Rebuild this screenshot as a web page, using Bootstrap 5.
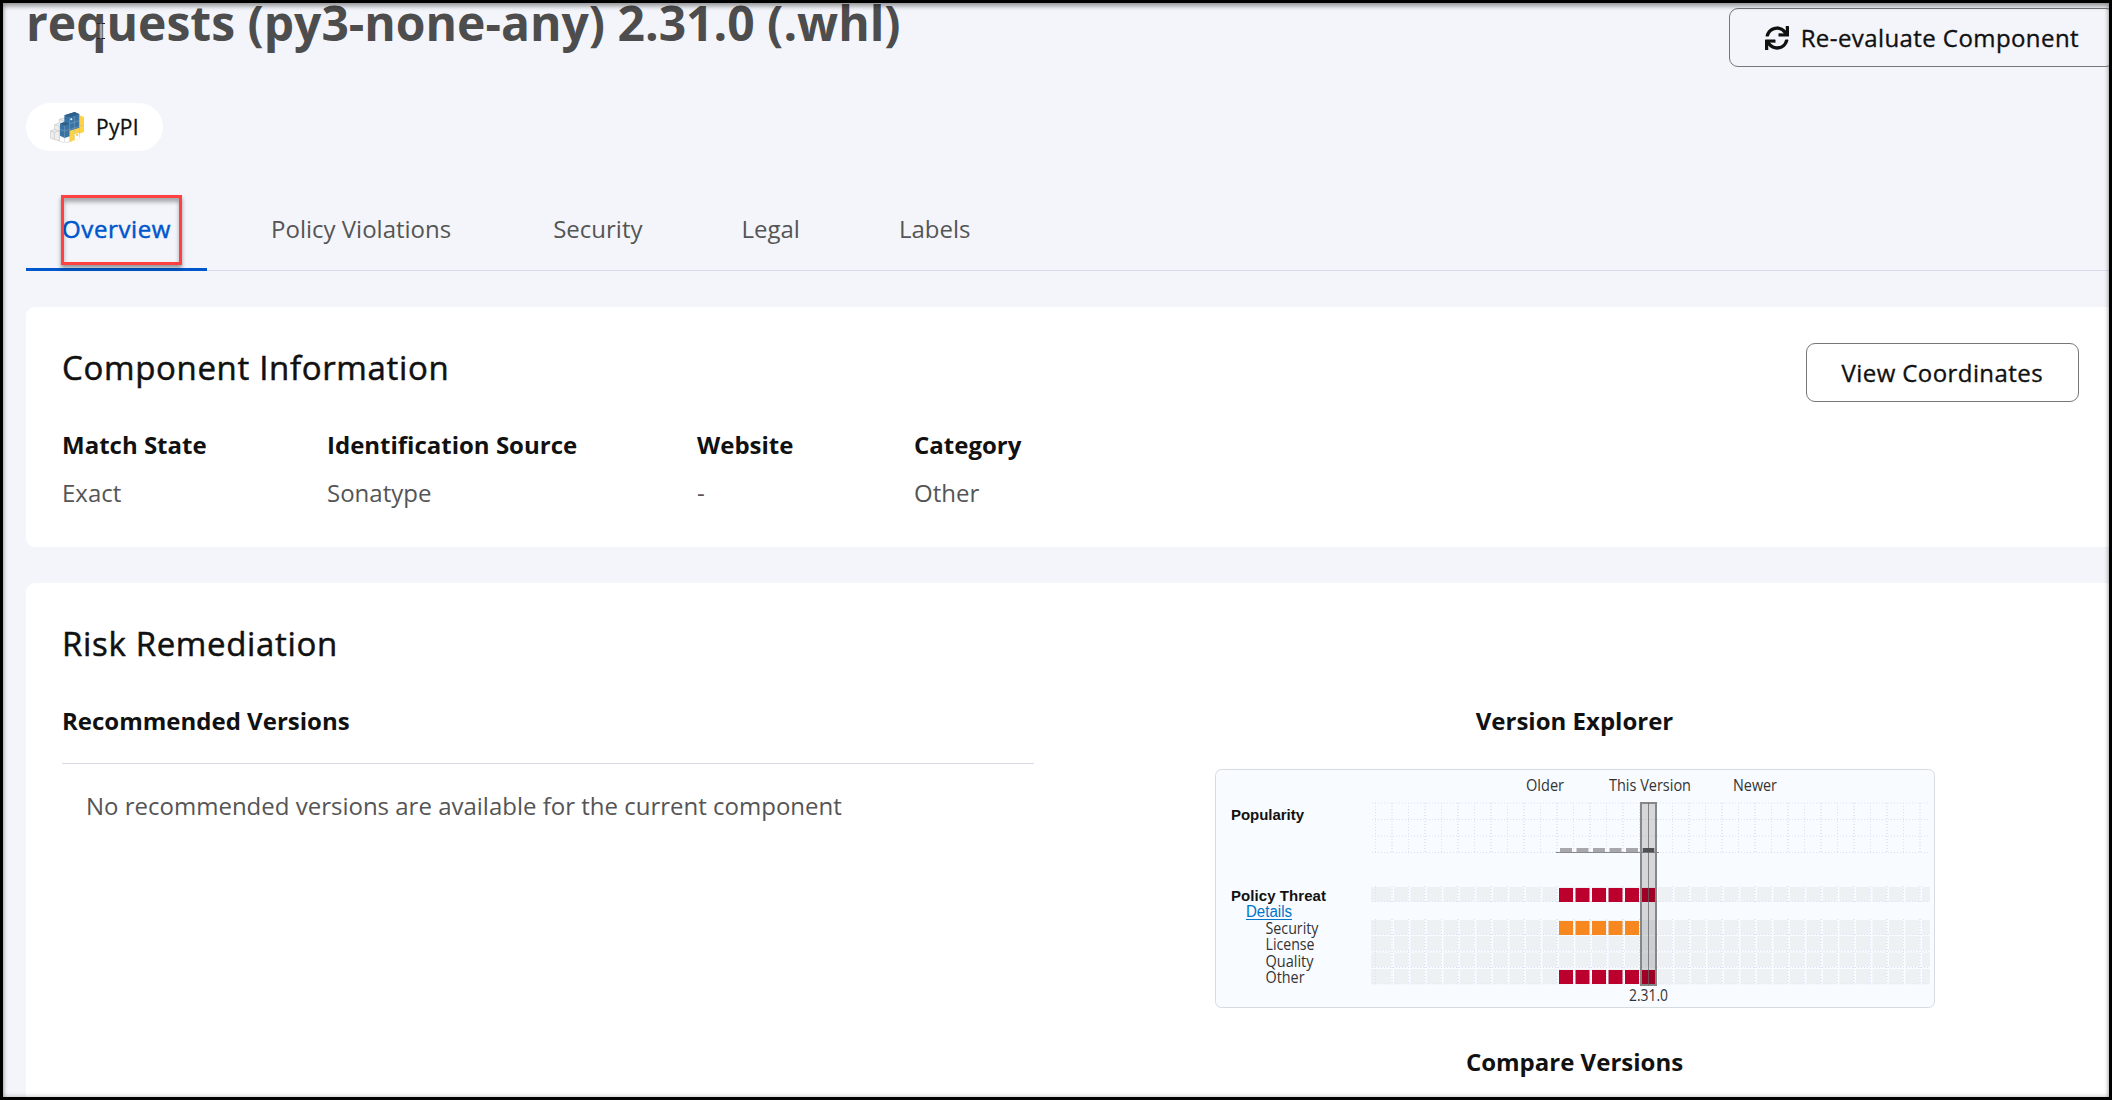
<!DOCTYPE html>
<html lang="en">
<head>
<meta charset="utf-8">
<title>Component details</title>
<link href="https://cdn.jsdelivr.net/npm/bootstrap@5.3.0/dist/css/bootstrap.min.css" rel="stylesheet">
<style>
body{font-family:"Open Sans",sans-serif;font-size:24px;line-height:36px;color:#4d4d4d;background:#f4f5fa;width:2112px;height:1100px;overflow:hidden}
.screen{width:2112px;height:1100px;overflow:hidden;position:relative}
.frame{position:absolute;inset:0;border:3px solid #000;pointer-events:none;box-shadow:inset 0 4px 4px rgba(0,0,0,.27),inset 0 0 5px rgba(0,0,0,.28)}
.page-body{width:2089px;margin-left:26px}
.page-title{font-size:48px;font-weight:700;line-height:44px;margin:1px 0 0;color:#4d4d4d;white-space:nowrap}
.header-row{height:52px}
.outline-btn{font-size:24px;line-height:35px;letter-spacing:.42px;-webkit-text-stroke:.35px #111;color:#111;border:1px solid #77777a;border-radius:9px;padding:11px 35px;height:59px;white-space:nowrap}
.re-eval{margin-top:8px;gap:12px}
.eco-pill{margin-top:51px;width:137px;height:48px;border-radius:24px;background:#fff;color:#111;font-size:21px;letter-spacing:.3px;-webkit-text-stroke:.3px #111;padding-left:24px;gap:12px}
.tab-strip{margin-top:40px;height:80px;border-bottom:1px solid #d9dbec}
.tab-strip .nav-link{padding:20px 36px 21px;color:#555;border-bottom:3px solid transparent;height:80px;border-radius:0;white-space:nowrap}
.tab-strip .nav-link.active{color:#0057cc;letter-spacing:.62px;-webkit-text-stroke:.5px #0057cc;border-bottom-color:#0057cc}
.t2{margin-left:28px}.t3{margin-left:30px}.t4{margin-left:27px}.t5{margin-left:27px}
.highlight{position:absolute;left:61px;top:195px;width:121px;height:70px;border:3px solid #ff4141;box-shadow:0 3px 4px rgba(0,0,0,.4),inset 0 4px 4px rgba(0,0,0,.32)}
.tile{background:#fff;border-radius:9px;margin-top:36px;padding:36px}
.tile h2{font-size:33px;font-weight:400;letter-spacing:.66px;-webkit-text-stroke:.5px #111;line-height:50px;color:#111;margin:0}
.tile h3,.tile dt{font-size:24px;font-weight:700;line-height:36px;color:#111;margin:0}
.info{height:240px}
.risk{height:560px}
.facts{margin-top:25px}
.facts dd{margin:12px 0 0;line-height:36px;color:#555}
.f1{width:265px}.f2{width:370px}.f3{width:217px}
.risk-cols{margin-top:34px}
.rec{width:972px}
.rec .msg{border-top:1px solid #d9dae8;margin-top:24px;padding:24px;color:#555}
.explorer{width:1009px}
.chart{display:block;margin:30px 0 0 2px}
.tile .compare{margin-top:35px}
.chart text{font-family:"Open Sans",sans-serif;font-size:16px;fill:#333}
.chart .hd{font-family:"Liberation Sans",sans-serif;font-size:15px;font-weight:700;fill:#111}
.chart .lnk{font-family:"Liberation Sans",sans-serif;fill:#0074c8}
.cursor{position:absolute;left:96px;top:22px}
</style>
<script src="https://cdn.jsdelivr.net/npm/bootstrap@5.3.0/dist/js/bootstrap.bundle.min.js"></script>
</head>
<body>
<div class="screen">
<main class="page-body">
  <header class="header-row d-flex justify-content-between align-items-start">
    <h1 class="page-title">requests (py3-none-any) 2.31.0 (.whl)</h1>
    <button class="btn outline-btn re-eval d-flex align-items-center" type="button">
      <svg width="24" height="24" viewBox="0 0 512 512" fill="#111"><path d="M440.65 12.57l4 82.77A247.16 247.16 0 0 0 255.83 8C134.73 8 33.91 94.92 12.29 209.82A12 12 0 0 0 24.09 224h49.05a12 12 0 0 0 11.67-9.26 175.91 175.91 0 0 1 317-56.94l-101.46-4.86a12 12 0 0 0-12.57 12v47.41a12 12 0 0 0 12 12H500a12 12 0 0 0 12-12V12a12 12 0 0 0-12-12h-47.37a12 12 0 0 0-11.98 12.57zM255.83 432a175.61 175.61 0 0 1-146-77.8l101.8 4.87a12 12 0 0 0 12.57-12v-47.4a12 12 0 0 0-12-12H12a12 12 0 0 0-12 12V500a12 12 0 0 0 12 12h47.35a12 12 0 0 0 12-12.6l-4.15-82.57A247.17 247.17 0 0 0 255.83 504c121.11 0 221.93-86.92 243.55-201.82a12 12 0 0 0-11.8-14.18h-49.05a12 12 0 0 0-11.67 9.26A175.86 175.86 0 0 1 255.83 432z"/></svg>
      <span>Re-evaluate Component</span>
    </button>
  </header>
  <div class="eco-pill d-flex align-items-center">
    <svg width="34" height="31" viewBox="0 0 102 93">
      <g fill="#efefef" stroke="#c4c4c4" stroke-width="2">
        <path d="M1 57l13-5V38l14-5V22l15-4 20 10v60l-20 4L1 78z"/>
        <path d="M1 57l12 4v20M13 61l17-6M14 38l14 5v44M28 43l16-5M28 22l15 5M14 52l14 5"/>
      </g>
      <path fill="#ffd343" d="M60 52l28-8V10l14 5v46l-14 5v14l-28 9z"/>
      <path fill="#fff" d="M30 70l14 7 15-5v15l-15 5-14-5zM73 66l14-4 1 18-14 4zM88 65l14-5v13l-14 5z"/>
      <path fill="#3873a5" d="M43 10L74 0l14 7v40l-29 9v17l-15 5-14-7V35l13-6z"/>
      <path fill="#2f608b" d="M43 10L74 0l14 7-29 9zM30 35l14-5 15 5-15 6z"/>
      <g fill="none" stroke="#9fb4c4" stroke-width="1.2"><path d="M44 41v50M59 16v71M73 12v69M88 7v70M44 57l58-18M59 35l29-9M30 52l14 6"/></g>
      <circle cx="64" cy="22" r="3" fill="#fff"/><circle cx="81" cy="68" r="4" fill="#ffd343"/>
    </svg>
    <span>PyPI</span>
  </div>
  <nav class="nav tab-strip flex-nowrap">
    <a class="nav-link active">Overview</a>
    <a class="nav-link t2">Policy Violations</a>
    <a class="nav-link t3">Security</a>
    <a class="nav-link t4">Legal</a>
    <a class="nav-link t5">Labels</a>
  </nav>
  <section class="tile info">
    <div class="d-flex justify-content-between align-items-start">
      <h2>Component Information</h2>
      <button class="btn outline-btn" type="button">View Coordinates</button>
    </div>
    <dl class="facts d-flex mb-0">
      <div class="f1"><dt>Match State</dt><dd>Exact</dd></div>
      <div class="f2"><dt>Identification Source</dt><dd>Sonatype</dd></div>
      <div class="f3"><dt>Website</dt><dd>-</dd></div>
      <div><dt>Category</dt><dd>Other</dd></div>
    </dl>
  </section>
  <section class="tile risk">
    <h2>Risk Remediation</h2>
    <div class="d-flex justify-content-between risk-cols">
      <div class="rec">
        <h3>Recommended Versions</h3>
        <div class="msg">No recommended versions are available for the current component</div>
      </div>
      <div class="explorer d-flex flex-column align-items-center">
        <h3>Version Explorer</h3>
        <svg class="chart" id="chart" width="721" height="240" viewBox="1215 769 721 240">
          <rect x="1215.5" y="769.5" width="719" height="238" rx="6" fill="#f8fbff" stroke="#d6dae1"/>
          <g id="plot"></g>
          <text x="1526" y="791" textLength="38" lengthAdjust="spacingAndGlyphs">Older</text>
          <text x="1609" y="791" textLength="82" lengthAdjust="spacingAndGlyphs">This Version</text>
          <text x="1733" y="791" textLength="44" lengthAdjust="spacingAndGlyphs">Newer</text>
          <text class="hd" x="1231" y="820" textLength="73">Popularity</text>
          <text class="hd" x="1231" y="901" textLength="95">Policy Threat</text>
          <text class="lnk" x="1246" y="917" textLength="46" lengthAdjust="spacingAndGlyphs">Details</text>
          <path d="M1246 919.5h46" stroke="#0074c8"/>
          <text x="1265.5" y="934" textLength="53" lengthAdjust="spacingAndGlyphs">Security</text>
          <text x="1265.5" y="950" textLength="49" lengthAdjust="spacingAndGlyphs">License</text>
          <text x="1265.5" y="967" textLength="48" lengthAdjust="spacingAndGlyphs">Quality</text>
          <text x="1265.5" y="983" textLength="39" lengthAdjust="spacingAndGlyphs">Other</text>
          <text x="1629" y="1001" textLength="39" lengthAdjust="spacingAndGlyphs">2.31.0</text>
        </svg>
        <h3 class="compare">Compare Versions</h3>
      </div>
    </div>
  </section>
</main>
<div class="highlight"></div>
<svg class="cursor" width="10" height="18" viewBox="0 0 10 18"><path d="M1 1.5h3m2 0h3M1 16.5h3m2 0h3" stroke="#222"/><path d="M4 2v14M6 2v14" stroke="#8a8a8a"/><path d="M5 2v14" stroke="#ddd"/></svg>
<div class="frame"></div>
</div>
<script>
// Grid, threat cells and popularity bars of the version chart
const step = 16.5, x0 = 1375.5;
const rows = [[887,14.5,'#bc002d'],[920,14.5,'#f6881f'],[936,14.5],[952.5,14.5],[969,15,'#bc002d']];
let s = '';
for (const [y,h] of rows) {
  s += `<rect x="1371" y="${y}" width="20" height="${h}" fill="#edf1f4"/>`;
  for (let i = 1; i < 34; i++) {
    const x = x0 + i*step + 2;
    s += `<rect x="${x}" y="${y}" width="${Math.min(14, 1930-x)}" height="${h}" fill="#edf1f4"/>`;
  }
}
const dots = 'stroke="#d9e2f3" stroke-dasharray="1 2"';
[803,819.5,836,852.5].forEach(y => s += `<path d="M1372 ${y}H1929" ${dots}/>`);
[901.5,934.5,951,967.5,984].forEach(y => s += `<path d="M1372 ${y}H1929" ${dots}/>`);
for (let i = 0; i < 34; i++) {
  const x = x0 + i*step, a = i%2 ? 'stroke-width="1.5"' : '';
  s += `<path d="M${x} 803V853M${x} 886V902M${x} 919V985" ${dots} ${a}/>`;
}
for (let i = 0; i < 6; i++) {
  const x = 1559 + i*step;
  for (const [y,h,c] of rows) if (c && !(i===5 && y===920)) s += `<rect x="${x}" y="${y+1}" width="14" height="14" fill="${c}"/>`;
  s += `<rect x="${x+1}" y="848" width="12" height="4" fill="#a8a8ac"/>`;
}
s += '<path d="M1556 852.5H1659" stroke="#88888c"/>';
s += '<rect x="1641" y="803" width="15" height="182" fill="#000" fill-opacity=".14" stroke="#858789" stroke-width="2"/><path d="M1648.5 803V985" stroke="#666" stroke-opacity=".75"/><rect x="1643" y="848" width="11" height="4" fill="#505053"/>';
document.getElementById('plot').innerHTML = s;
</script>
</body>
</html>
